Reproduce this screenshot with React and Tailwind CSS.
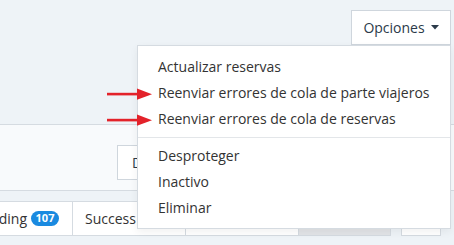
import { useState } from 'react';

const MENU_TOP = ['Actualizar reservas', 'Reenviar errores de cola de parte viajeros', 'Reenviar errores de cola de reservas'];
const MENU_BOTTOM = ['Desproteger', 'Inactivo', 'Eliminar'];

function RedArrow({ className }) {
  return (
    <svg className={className} width="46" height="12" viewBox="0 0 46 12">
      <rect x="0" y="4.8" width="32" height="2.6" fill="#e3222a" />
      <polygon points="30,0.5 45,6.2 30,11.8" fill="#e3222a" />
    </svg>
  );
}

export default function App() {
  const [open] = useState(true);

  return (
    <div
      className="relative w-[454px] h-[245px] overflow-hidden bg-[#eef3f7] text-[14px] text-[#333]"
      style={{ fontFamily: '"Open Sans", "Noto Sans", sans-serif' }}
    >
      {/* Top bar */}
      <div className="h-[124px] flex justify-end items-start pt-[10px] pr-[3px]">
        <div className="relative">
          <button className="h-[35px] w-[100px] flex items-center justify-center gap-[6px] bg-white border border-[#cfd6dd] text-[#2b3a4a]">
            <span>Opciones</span>
            <svg width="8" height="5" viewBox="0 0 8 5">
              <polygon points="0,0 8,0 4,4.5" fill="#2b3a4a" />
            </svg>
          </button>

          {open && (
            <div className="absolute right-0 top-[35px] w-[314px] bg-white border border-[#d5dbe1] shadow-[0_3px_8px_rgba(0,0,0,0.06)] pt-[8px] pb-[7px] z-10">
              {MENU_TOP.map((item) => (
                <div key={item} className="h-[26px] leading-[26px] px-[20px] whitespace-nowrap text-[#333]">
                  {item}
                </div>
              ))}
              <div className="my-[5px] h-px bg-[#e3e6e9]" />
              {MENU_BOTTOM.map((item) => (
                <div key={item} className="h-[26px] leading-[26px] px-[20px] whitespace-nowrap text-[#333]">
                  {item}
                </div>
              ))}
            </div>
          )}
        </div>
      </div>

      {/* Filter panel */}
      <div className="h-[67px] bg-[#f8fafc] border-t border-b border-[#d5dbe1] pl-[117px] pt-[20px]">
        <button className="h-[35px] px-[14px] bg-white border border-[#cfd6dd] text-[#2b3a4a]">
          D
        </button>
      </div>

      {/* Tabs */}
      <div className="mt-[10px] flex h-[35px]">
        <div className="-ml-[37px] w-[110px] flex items-center justify-end pr-[13px] bg-white border border-[#d5dbe1]">
          <span>Pending</span>
          <span className="ml-[4px] h-[15px] w-[28px] rounded-full bg-[#1a8ae0] text-white text-[11px] font-bold flex items-center justify-center">
            107
          </span>
        </div>
        <div className="w-[113px] flex items-center pl-[12px] bg-white border border-l-0 border-[#d5dbe1]">
          Success
        </div>
        <div className="w-[113px] flex items-center pl-[12px] bg-white border border-l-0 border-[#d5dbe1]">
          Error
        </div>
        <div className="w-[92px] flex items-center pl-[12px] bg-[#e2e4e7] border border-l-0 border-[#d5dbe1]">
          Todos
        </div>
        <div className="ml-[10px] w-[40px] bg-white border border-[#d5dbe1]" />
      </div>

      {/* Annotation arrows */}
      <RedArrow className="absolute z-20 left-[107px] top-[88px]" />
      <RedArrow className="absolute z-20 left-[107px] top-[114px]" />
    </div>
  );
}
